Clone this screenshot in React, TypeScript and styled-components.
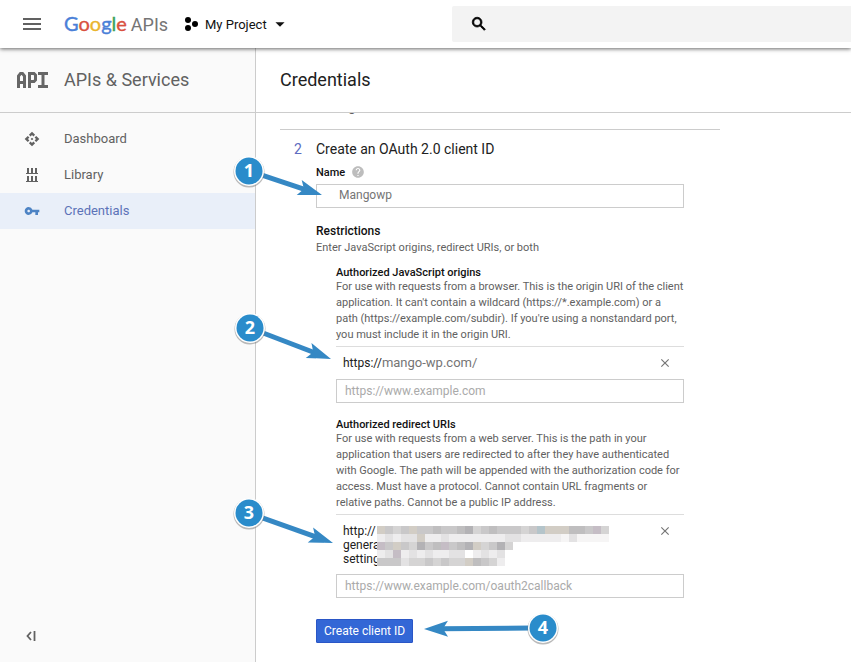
import React from "react";
import styled, { createGlobalStyle } from "styled-components";
import { MdMenu, MdSearch, MdArrowDropDown, MdApi, MdVpnKey, MdHelp, MdClose } from "react-icons/md";

const GlobalStyle = createGlobalStyle`
  * { box-sizing: border-box; }
  body { margin: 0; background: #fff; font-family: Roboto, sans-serif; font-size: 13px; color: #212121; }
  button, input { font-family: inherit; }
  h1, h2, h3, p, ol, ul { margin: 0; padding: 0; font-weight: 400; }
`;

const Page = styled.div`
  position: relative;
  display: flex;
  flex-direction: column;
  height: 100vh;
  overflow: hidden;
`;

const TopBar = styled.header`
  position: relative;
  z-index: 1;
  display: flex;
  align-items: center;
  flex: 0 0 48px;
  background: #fff;
  box-shadow: 0 1px 4px rgba(0, 0, 0, 0.6);
`;

const IconButton = styled.button<{ $width: number; $height: number }>`
  display: flex;
  align-items: center;
  justify-content: center;
  width: ${(p) => p.$width}px;
  height: ${(p) => p.$height}px;
  padding: 0;
  border: 0;
  background: none;
  color: #616161;
`;

const Brand = styled.a`
  display: flex;
  align-items: baseline;
  gap: 4px;
  width: 106px;
  font-size: 18px;
  line-height: 24px;
  color: #757575;
  text-decoration: none;
  white-space: nowrap;
`;

const LogoWord = styled.span`
  font-family: Lato, Roboto, sans-serif;
  font-size: 20px;
`;

const Letter = styled.span<{ $color: string }>`
  color: ${(p) => p.$color};
  -webkit-text-stroke: 0.4px ${(p) => p.$color};
`;

const ProjectButton = styled.button`
  display: flex;
  align-items: center;
  width: 268px;
  height: 32px;
  margin-left: 14px;
  padding: 0;
  border: 0;
  background: none;
  color: #111;
  font-size: 13px;
`;

const ProjectName = styled.span`
  margin: 0 2px 0 7px;
`;

const SearchBox = styled.label`
  display: flex;
  align-items: center;
  flex: 1;
  height: 36px;
  padding-left: 18px;
  background: #f3f3f3;
  border-radius: 2px 0 0 2px;
  color: #000;

  path:last-child { stroke: #000; stroke-width: 1; }
`;

const SearchInput = styled.input`
  flex: 1;
  min-width: 0;
  margin-left: 16px;
  border: 0;
  outline: 0;
  background: transparent;
  font-size: 14px;
`;

const Body = styled.div`
  display: flex;
  flex: 1;
  min-height: 0;
`;

const Sidebar = styled.aside`
  display: flex;
  flex-direction: column;
  flex: 0 0 256px;
  border-right: 1px solid #ccc;
  background: #fafafa;
`;

const SectionHeader = styled.div`
  display: flex;
  align-items: center;
  flex: 0 0 65px;
  padding-left: 16px;
  border-bottom: 1px solid #ccc;
`;

const SectionTitle = styled.h2`
  margin-left: 16px;
  font-size: 18px;
  line-height: 24px;
  color: #616161;
`;

const Nav = styled.nav`
  display: flex;
  flex-direction: column;
  flex: 1;
  padding-top: 8px;
`;

const NavLink = styled.a<{ $active?: boolean }>`
  display: flex;
  align-items: center;
  gap: 24px;
  height: 36px;
  padding: 0 24px 1px;
  color: ${(p) => (p.$active ? "#5c73b8" : "#616161")};
  background: ${(p) => (p.$active ? "#e9eff9" : "transparent")};
  text-decoration: none;

  svg { flex: 0 0 16px; color: ${(p) => (p.$active ? "#4d83c4" : "#616161")}; }
`;

const CollapseRow = styled.div`
  padding: 0 0 14px 19px;
`;

const Main = styled.main`
  display: flex;
  flex-direction: column;
  flex: 1;
  min-width: 0;
`;

const PageHeader = styled.div`
  display: flex;
  align-items: center;
  flex: 0 0 65px;
  padding-left: 24px;
  border-bottom: 1px solid #ccc;
`;

const PageTitle = styled.h1`
  font-size: 18px;
  line-height: 24px;
  color: #212121;
`;

const Scroller = styled.div`
  flex: 1;
  min-height: 0;
  padding: 0 24px;
  overflow: hidden;
`;

const Steps = styled.ol`
  max-width: 440px;
  list-style: none;
`;

const PreviousStep = styled.li`
  display: flex;
  flex-direction: column;
  justify-content: flex-end;
  height: 32px;
  margin-top: -15px;
  padding: 0 0 14px 36px;
  border-bottom: 1px solid #ccc;
  color: #616161;
  line-height: 16px;
`;

const Step = styled.li`
  display: grid;
  grid-template-columns: 36px 1fr;
  padding-top: 9px;
`;

const StepNumber = styled.span`
  padding-left: 14px;
  color: #5c6bc0;
  font-size: 14px;
  line-height: 20px;
`;

const Form = styled.form`
  width: 368px;
`;

const StepTitle = styled.h2`
  font-size: 14px;
  line-height: 20px;
`;

const FieldLabel = styled.label`
  display: flex;
  align-items: center;
  gap: 6px;
  height: 24px;
  margin-top: 1px;
  font-size: 11px;
  font-weight: 500;
  color: #111;

  svg { color: #bdbdbd; }
`;

const TextInput = styled.input<{ $filled?: boolean }>`
  display: block;
  width: 100%;
  height: 24px;
  padding: ${(p) => (p.$filled ? "0 8px 3px 22px" : "0 8px")};
  border: 1px solid #ccc;
  outline: 0;
  background: #fff;
  color: #757575;
  font-size: 12px;

  &::placeholder { color: #aaa; opacity: 1; }
`;

const Heading = styled.h3`
  margin-top: 14px;
  font-size: 12px;
  font-weight: 500;
  line-height: 18px;
  color: #111;
`;

const Note = styled.p`
  font-size: 11px;
  line-height: 16px;
  color: #616161;
`;

const UriGroup = styled.fieldset<{ $gap: number }>`
  min-width: 0;
  margin: ${(p) => p.$gap}px 0 0 20px;
  padding: 0;
  border: 0;
`;

const UriLegend = styled.legend`
  padding: 0;
  font-size: 11px;
  font-weight: 500;
  line-height: 13px;
  color: #111;
`;

const UriRow = styled.div`
  display: flex;
  align-items: flex-start;
  justify-content: space-between;
  margin-top: 3px;
  padding: 8px 11px 8px 7px;
  border-top: 1px solid #ddd;

  button { color: #757575; }
`;

const Uri = styled.div`
  position: relative;
  font-size: 12px;
  line-height: 14px;
  color: #212121;
  padding-top: 1px;
`;

const UriHost = styled.span`
  color: #757575;
  font-size: 13px;
`;

const Mosaic = styled.svg`
  position: absolute;
  left: 34px;
  top: 3px;
`;

const SubmitButton = styled.button`
  display: block;
  height: 24px;
  margin-top: 21px;
  padding: 0 7px;
  border: 1px solid #2a56c6;
  border-radius: 1px;
  background: #3367d6;
  color: #fff;
  font-size: 12px;
`;

const Callouts = styled.svg`
  position: absolute;
  z-index: 2;
  left: 0;
  top: 0;
  pointer-events: none;
`;

const CalloutNumber = styled.text`
  font: 700 18px "Open Sans", sans-serif;
  fill: #fff;
  text-anchor: middle;
`;

const GOOGLE: [string, string][] = [
  ["G", "#4a80d8"], ["o", "#d9503f"], ["o", "#eab52e"], ["g", "#4a80d8"], ["l", "#3fa35a"], ["e", "#d9503f"],
];

function ProjectIcon() {
  return (
    <svg width="14" height="16" viewBox="0 0 14 16" fill="#000" aria-hidden>
      <circle cx="4" cy="4" r="3" />
      <circle cx="4" cy="12" r="3" />
      <circle cx="11" cy="8" r="3" />
    </svg>
  );
}

function ApiIcon() {
  return (
    <svg width="32" height="16" viewBox="0 0 32 16" fill="none" stroke="#666" strokeWidth="3" aria-hidden>
      <path d="M2.5 16V4L4.5 1.5H6.5L8.5 4V16M2.5 10.5H8.5" />
      <path d="M13.5 16V1.5H18L19.5 3V8L18 9.5H13.5" />
      <path d="M22 1.5H32M27 1.5V14.5M22 14.5H32" />
    </svg>
  );
}

function LibraryIcon() {
  return (
    <svg width="16" height="16" viewBox="0 0 16 16" fill="none" stroke="currentColor" aria-hidden>
      <path strokeWidth="2" d="M4 1V6M8 1V6M12 1V6M4 9V14M8 9V14M12 9V14" />
      <path strokeWidth="1" d="M2 6.5H14M2 14.5H14" />
    </svg>
  );
}

function CollapseIcon() {
  return (
    <svg width="12" height="12" viewBox="0 0 12 12" fill="none" stroke="currentColor" aria-hidden>
      <path strokeWidth="1.8" d="M6 2L2.5 6L6 10" />
      <path strokeWidth="1.8" d="M9.5 1V11" />
    </svg>
  );
}

const MOSAIC_ROWS = [
  "scdcsccbccbadcbcccdcwsssbbcvd",
  "fefeesffefffffffeefffffgegggg",
  "vcscdacbvcbasdcad",
  "fevfefeffee fefe",
  "ccceddcdcddsbcdf",
];

const TONES: Record<string, string> = {
  a: "#b3b2b5",
  b: "#bfbebf",
  c: "#c9c8c9",
  d: "#d5d4d4",
  e: "#e3e2e3",
  f: "#eeedee",
  g: "#f6f5f5",
  s: "#d2cdc5",
  v: "#c5bdc5",
  w: "#b4c4ca",
};

function HiddenAddress() {
  return (
    <Mosaic width="232" height="40" aria-label="Hidden address" role="img">
      {MOSAIC_ROWS.flatMap((row, y) =>
        [...row].map((tone, x) =>
          TONES[tone] ? <rect key={`${x}-${y}`} x={x * 8} y={y * 8} width="8" height="8" fill={TONES[tone]} /> : null
        )
      )}
    </Mosaic>
  );
}

interface CalloutProps { label: string; x: number; y: number; tipX: number; tipY: number }

function Callout({ label, x, y, tipX, tipY }: CalloutProps) {
  const angle = (Math.atan2(tipY - y, tipX - x) * 180) / Math.PI;
  const length = Math.hypot(tipX - x, tipY - y);
  return (
    <g transform={`translate(${x} ${y})`}>
      <g transform={`rotate(${angle})`} fill="#3588c4">
        <rect x="12" y="-2.5" width={length - 28} height="5" />
        <path d={`M${length} 0L${length - 24} -8L${length - 19} 0L${length - 24} 8Z`} />
      </g>
      <circle cx="0" cy="1" r="15.5" fill="#777" opacity="0.5" />
      <circle r="15" fill="#fff" />
      <circle r="13.5" fill="#2a8ccb" />
      <CalloutNumber y="6">{label}</CalloutNumber>
    </g>
  );
}

export default function App() {
  return (
    <>
      <GlobalStyle />
      <Page>
        <TopBar>
          <IconButton $width={64} $height={48} aria-label="Menu"><MdMenu size={24} /></IconButton>
          <Brand href="#home">
            <LogoWord>{GOOGLE.map(([ch, color], i) => <Letter key={i} $color={color}>{ch}</Letter>)}</LogoWord>
            APIs
          </Brand>
          <ProjectButton>
            <ProjectIcon />
            <ProjectName>My Project</ProjectName>
            <MdArrowDropDown size={22} />
          </ProjectButton>
          <SearchBox>
            <MdSearch size={18} />
            <SearchInput type="search" aria-label="Search" />
          </SearchBox>
        </TopBar>
        <Body>
          <Sidebar>
            <SectionHeader>
              <ApiIcon />
              <SectionTitle>APIs &amp; Services</SectionTitle>
            </SectionHeader>
            <Nav>
              <NavLink href="#dashboard"><MdApi size={16} />Dashboard</NavLink>
              <NavLink href="#library"><LibraryIcon />Library</NavLink>
              <NavLink href="#credentials" $active aria-current="page"><MdVpnKey size={16} />Credentials</NavLink>
            </Nav>
            <CollapseRow>
              <IconButton $width={24} $height={24} aria-label="Collapse menu"><CollapseIcon /></IconButton>
            </CollapseRow>
          </Sidebar>
          <Main>
            <PageHeader><PageTitle>Credentials</PageTitle></PageHeader>
            <Scroller>
              <Steps>
                <PreviousStep>Calling</PreviousStep>
                <Step>
                  <StepNumber>2</StepNumber>
                  <Form onSubmit={(e) => e.preventDefault()}>
                    <StepTitle>Create an OAuth 2.0 client ID</StepTitle>
                    <FieldLabel htmlFor="client-name">Name <MdHelp size={14} /></FieldLabel>
                    <TextInput id="client-name" $filled defaultValue="Mangowp" />
                    <Heading>Restrictions</Heading>
                    <Note>Enter JavaScript origins, redirect URIs, or both</Note>
                    <UriGroup $gap={10}>
                      <UriLegend>Authorized JavaScript origins</UriLegend>
                      <Note>
                        For use with requests from a browser. This is the origin URI of the client application.
                        It can't contain a wildcard (https://*.example.com) or a path (https://example.com/subdir).
                        If you're using a nonstandard port, you must include it in the origin URI.
                      </Note>
                      <UriRow>
                        <Uri>https://<UriHost>mango-wp.com/</UriHost></Uri>
                        <IconButton $width={16} $height={16} type="button" aria-label="Remove origin"><MdClose size={14} /></IconButton>
                      </UriRow>
                      <TextInput aria-label="Add origin" placeholder="https://www.example.com" />
                    </UriGroup>
                    <UriGroup $gap={15}>
                      <UriLegend>Authorized redirect URIs</UriLegend>
                      <Note>
                        For use with requests from a web server. This is the path in your application that users are
                        redirected to after they have authenticated with Google. The path will be appended with the
                        authorization code for access. Must have a protocol. Cannot contain URL fragments or relative
                        paths. Cannot be a public IP address.
                      </Note>
                      <UriRow>
                        <Uri>http://<br />genera<br />setting<HiddenAddress /></Uri>
                        <IconButton $width={16} $height={16} type="button" aria-label="Remove redirect URI"><MdClose size={14} /></IconButton>
                      </UriRow>
                      <TextInput aria-label="Add redirect URI" placeholder="https://www.example.com/oauth2callback" />
                    </UriGroup>
                    <SubmitButton type="submit">Create client ID</SubmitButton>
                  </Form>
                </Step>
              </Steps>
            </Scroller>
          </Main>
        </Body>
        <Callouts width="600" height="662">
          <Callout label="1" x={249} y={171} tipX={322} tipY={195} />
          <Callout label="2" x={250} y={328} tipX={331} tipY={359} />
          <Callout label="3" x={249} y={513} tipX={333} tipY={543} />
          <Callout label="4" x={543} y={628} tipX={424} tipY={629} />
        </Callouts>
      </Page>
    </>
  );
}
